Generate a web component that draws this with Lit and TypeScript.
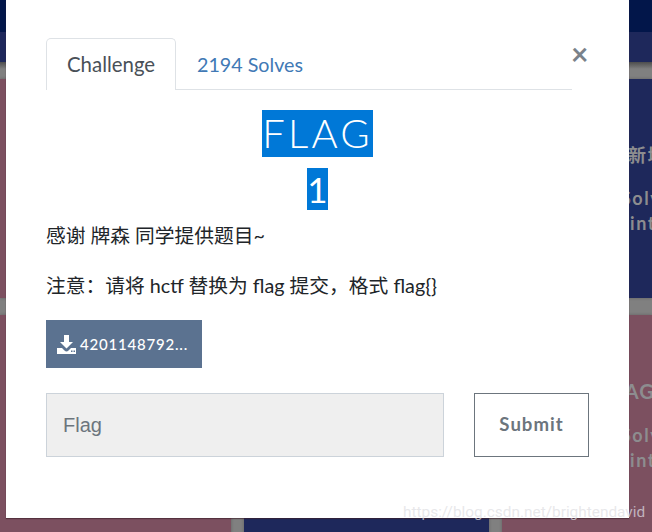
import { LitElement, html, css } from "lit";
import { customElement } from "lit/decorators.js";

@customElement("app-root")
export class AppRoot extends LitElement {
  static styles = css`
    :host { display: block; position: relative; width: 652px; height: 532px; overflow: hidden; font-family: Lato, "Noto Sans CJK SC", sans-serif; background: #808080; }
    .page { display: flex; flex-direction: column; height: 100%; }
    .topbar { height: 32px; background: #02164a; flex: none; }
    .band { height: 30px; background: #1e285b; flex: none; }
    .grid { flex: 1; display: grid; grid-template-columns: 231px 245px 1fr; column-gap: 13px; row-gap: 17px; grid-template-rows: 219px 219px 1fr; padding-top: 17px; background: linear-gradient(#4d4d4d 0, #808080 7px) no-repeat; background-color: #808080; background-size: 100% 17px; }
    .card { overflow: hidden; color: #8d8d8f; font-weight: 700; font-size: 18px; line-height: 25px; white-space: nowrap; box-shadow: 0 0 3px rgba(0,0,0,.25); }
    .maroon { background: #7c5060; }
    .navy { background: #1e285b; }
    .right { padding-top: 64px; display: flex; flex-direction: column; letter-spacing: 1.5px; }
    .right p { margin: 0 0 18px; padding-left: 126px; }
    .right p.big { font-size: 20px; padding-left: 99px; letter-spacing: 1px; margin-bottom: 19px; }
    .right .l1 { padding-left: 119px; }
    .right .l2 { padding-left: 104px; }
    .modal { position: absolute; left: 6px; top: 0; width: 623px; height: 518px; background: #fff; box-shadow: 0 1px 1px rgba(60,30,40,.6); padding: 38px 0 0 40px; box-sizing: border-box; color: #212529; }
    .head { display: flex; width: 543px; }
    .tabs { flex: none; width: 526px; display: flex; height: 52px; box-sizing: border-box; border-bottom: 1px solid #dee2e6; }
    .tab { height: 52px; box-sizing: border-box; padding: 0 21px; line-height: 54px; color: #4179b5; font-size: 19.7px; }
    .tab.active { width: 130px; color: #495057; border: 1px solid #dee2e6; border-bottom: 0; background: #fff; border-radius: 5px 5px 0 0; line-height: 50px; padding: 0 20px; font-size: 20.4px; }
    .close { font-size: 30px; font-weight: 700; color: #7a828a; line-height: 30px; height: 30px; margin-left: -1px; }
    .title { width: 543px; display: flex; flex-direction: column; align-items: center; margin-top: 20px; }
    .title span { background: #0078d7; color: #fff; }
    .flag { font-size: 40px; line-height: 47px; letter-spacing: 3.2px; font-weight: 300; }
    .num { font-size: 35px; line-height: 42px; margin-top: 11px; font-weight: 400; }
    .body { font-size: 19.75px; line-height: 29px; margin-top: 11px; color: #212529; }
    .body p { margin: 0 0 21px; }
    .dl { display: flex; align-items: center; gap: 4px; width: 156px; height: 48px; box-sizing: border-box; padding-left: 11px; margin-top: -1px; background: #5b7290; color: #fff; font-size: 15px; font-weight: 500; letter-spacing: 0.8px; }
    .dl svg { flex: none; }
    .form { display: flex; gap: 30px; margin-top: 25px; }
    input { width: 398px; height: 64px; box-sizing: border-box; border: 1px solid #ccd3da; background: #efefef; padding: 0 16px; font: 20px "Liberation Sans", sans-serif; outline: none; }
    input::placeholder { color: #6c757d; opacity: 1; }
    button { width: 115px; height: 64px; box-sizing: border-box; background: #fff; border: 1px solid #6c757d; color: #6c757d; font: 700 18.6px Lato, sans-serif; letter-spacing: 1px; padding: 0 0 3px; }
    .wm { position: absolute; left: 403px; top: 503px; font: 15.4px/19px Roboto, sans-serif; color: rgba(222,222,226,.72); }
  `;

  render() {
    return html`
      <div class="page">
        <div class="topbar"></div>
        <div class="band"></div>
        <div class="grid">
          <div class="card maroon"></div>
          <div class="card navy"></div>
          <div class="card navy right">
            <p>新城</p>
            <span class="l1">Solv</span>
            <span class="l2">Point</span>
          </div>
          <div class="card maroon"></div>
          <div class="card navy"></div>
          <div class="card maroon right">
            <p class="big">FLAG</p>
            <span class="l1">Solv</span>
            <span class="l2">Point</span>
          </div>
        </div>
      </div>
      <div class="modal">
        <div class="head">
          <div class="tabs">
            <div class="tab active">Challenge</div>
            <div class="tab">2194 Solves</div>
          </div>
          <div class="close">×</div>
        </div>
        <div class="title">
          <span class="flag">FLAG</span>
          <span class="num">1</span>
        </div>
        <div class="body">
          <p>感谢 牌森 同学提供题目~</p>
          <p>注意：请将 hctf 替换为 flag 提交，格式 flag{}</p>
        </div>
        <div class="dl">
          <svg width="19" height="19" viewBox="0 0 19 19"><path fill="#fff" fill-rule="evenodd" d="M7 0h5v7h4l-6.500 6.500L3 7h4zM0 13h5l2.500 2.500a3 3 0 0 0 4 0L14 13h5v6H0zM14 15.500h1.500V17H14zM16.500 15.500H18V17h-1.500z"/></svg>
          <span>4201148792...</span>
        </div>
        <div class="form">
          <input placeholder="Flag" />
          <button>Submit</button>
        </div>
      </div>
      <div class="wm">https://blog.csdn.net/brightendavid</div>
    `;
  }
}
